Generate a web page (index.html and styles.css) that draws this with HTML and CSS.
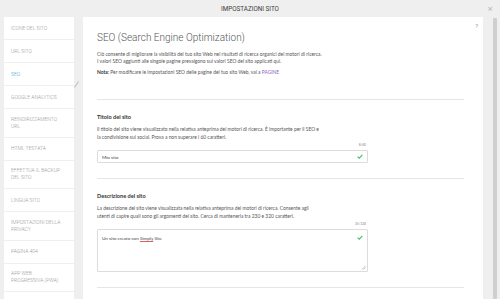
FILE: index.html
```html
<!DOCTYPE html>
<html lang="it">
<head>
<meta charset="utf-8">
<title>Impostazioni sito</title>
<link rel="stylesheet" href="styles.css">
</head>
<body>
<header class="topbar">
  <span></span>
  <span class="topbar-title">IMPOSTAZIONI SITO</span>
  <span class="close">×</span>
</header>
<div class="layout">
  <nav class="sidebar">
    <a class="nav-item">ICONE DEL SITO</a>
    <a class="nav-item">URL SITO</a>
    <a class="nav-item active">SEO</a>
    <a class="nav-item">GOOGLE ANALYTICS</a>
    <a class="nav-item two">REINDIRIZZAMENTO<br>URL</a>
    <a class="nav-item">HTML TESTATA</a>
    <a class="nav-item two">EFFETTUA IL BACKUP<br>DEL SITO</a>
    <a class="nav-item">LINGUA SITO</a>
    <a class="nav-item two">IMPOSTAZIONI DELLA<br>PRIVACY</a>
    <a class="nav-item">PAGINA 404</a>
    <a class="nav-item two">APP WEB<br>PROGRESSIVA (PWA)</a>
  </nav>
  <main class="panel">
    <span class="help">?</span>
    <section class="intro">
      <h1 class="title">SEO (Search Engine Optimization)</h1>
      <p class="lead">Ciò consente di migliorare la visibilità del tuo sito Web nei risultati di ricerca organici dei motori di ricerca.<br>I valori SEO aggiunti alle singole pagine prevalgono sui valori SEO del sito applicati qui.</p>
      <p class="note"><b>Nota:</b> Per modificare le impostazioni SEO delle pagine del tuo sito Web, vai a <a class="link">PAGINE</a></p>
    </section>
    <section class="field">
      <h2 class="field-title">Titolo del sito</h2>
      <p class="field-desc">Il titolo del sito viene visualizzato nella relativa anteprima dei motori di ricerca. È importante per il SEO e<br>la condivisione sui social. Prova a non superare i 60 caratteri.</p>
      <div class="counter">8/60</div>
      <div class="input">
        <span>Mio sito</span>
        <svg class="check" viewBox="0 0 10 8" width="6" height="5"><path d="M1 4.2 L3.8 6.8 L9 1.2" fill="none" stroke="#3dbb6e" stroke-width="1.8"/></svg>
      </div>
    </section>
    <section class="field">
      <h2 class="field-title">Descrizione del sito</h2>
      <p class="field-desc">La descrizione del sito viene visualizzata nella relativa anteprima dei motori di ricerca. Consente agli<br>utenti di capire quali sono gli argomenti del sito. Cerca di mantenerla tra 230 e 320 caratteri.</p>
      <div class="counter">35/320</div>
      <div class="input area">
        <span>Un sito creato con <span class="spell">Simply</span> Site</span>
        <svg class="check" viewBox="0 0 10 8" width="6" height="5"><path d="M1 4.2 L3.8 6.8 L9 1.2" fill="none" stroke="#3dbb6e" stroke-width="1.8"/></svg>
        <svg class="grip" viewBox="0 0 6 6" width="5" height="5"><path d="M1 5.5 L5.5 1 M3.2 5.5 L5.5 3.2" stroke="#999" stroke-width="0.7"/></svg>
      </div>
    </section>
    <section class="field"></section>
  </main>
  <div class="scrollbar"><div class="thumb"></div></div>
</div>
</body>
</html>
```
FILE: styles.css
```css
* { box-sizing: border-box; }

html, body {
  margin: 0;
  width: 500px;
  height: 299px;
  overflow: hidden;
}

body {
  background: #efefef;
  font-family: Lato, "Open Sans", sans-serif;
  color: #555;
}

.topbar {
  height: 17px;
  display: grid;
  grid-template-columns: 1fr auto 1fr;
  align-items: center;
}

.topbar-title {
  font-family: Roboto, sans-serif;
  font-size: 6.3px;
  color: #3c3c3c;
}

.close {
  justify-self: end;
  margin-right: 7px;
  font-family: "DejaVu Sans", sans-serif;
  font-size: 7px;
  color: #aaa;
}

.layout {
  display: flex;
  height: 282px;
  padding-left: 4px;
  gap: 9px;
}

.sidebar {
  width: 70px;
  background: #fff;
  display: flex;
  flex-direction: column;
}

.nav-item {
  position: relative;
  display: block;
  padding: 7.5px 7px;
  line-height: 7px;
  font-family: Roboto, sans-serif;
  font-weight: 300;
  font-size: 5px;
  color: #999;
  border-bottom: 1px solid #efefef;
  white-space: nowrap;
}

.nav-item.two {
  padding-top: 6.75px;
  padding-bottom: 6.75px;
}

.nav-item.active {
  color: #3a9fd8;
}

.nav-item.active::after {
  content: "";
  position: absolute;
  right: -3px;
  top: 18px;
  width: 1px;
  height: 7px;
  background: #c2c2c2;
  transform: rotate(35deg);
}

.panel {
  position: relative;
  flex: 1;
  background: #fff;
  padding: 14px 19px 0 14px;
  overflow: hidden;
}

.help {
  position: absolute;
  right: 5px;
  top: 5px;
  font-family: Roboto, sans-serif;
  font-size: 6px;
  color: #999;
}

.title {
  margin: 0;
  font-family: Roboto, sans-serif;
  font-weight: 300;
  font-size: 10px;
  line-height: 13px;
  color: #555;
}

.intro {
  padding-bottom: 23px;
}

.lead, .note {
  margin: 7px 0 0;
  font-size: 4.9px;
  line-height: 7px;
  white-space: nowrap;
}

.note {
  margin-top: 4px;
}

.note b {
  color: #333;
}

.link {
  color: #8b63c9;
}

.field {
  border-top: 1px solid #e6e6e6;
  padding: 13px 0 15px;
}

.field-title {
  margin: 0;
  font-size: 5.6px;
  line-height: 8px;
  font-weight: 700;
  color: #333;
}

.field-desc {
  margin: 5px 0 0;
  font-size: 4.9px;
  line-height: 7.5px;
  white-space: nowrap;
}

.counter {
  width: 271px;
  margin-top: 1.5px;
  padding-right: 2px;
  text-align: right;
  font-size: 3.3px;
  line-height: 5px;
  color: #888;
}

.input {
  margin-top: 2.5px;
  width: 271px;
  height: 13px;
  border: 1px solid #dcdcdc;
  border-radius: 1px;
  padding: 0 4px;
  display: flex;
  align-items: center;
  justify-content: space-between;
  font-size: 4.6px;
  color: #444;
}

.input.area {
  position: relative;
  height: 43px;
  align-items: flex-start;
  padding-top: 5px;
}

.spell {
  text-decoration: underline solid #e06060;
  text-decoration-thickness: 0.4px;
  text-underline-offset: 0.8px;
}

.grip {
  position: absolute;
  right: 1px;
  bottom: 1px;
}

.scrollbar {
  width: 8px;
  padding: 1px 3px 0 1px;
}

.thumb {
  height: 100%;
  background: #cfcfcf;
  border-radius: 1px;
}
```
